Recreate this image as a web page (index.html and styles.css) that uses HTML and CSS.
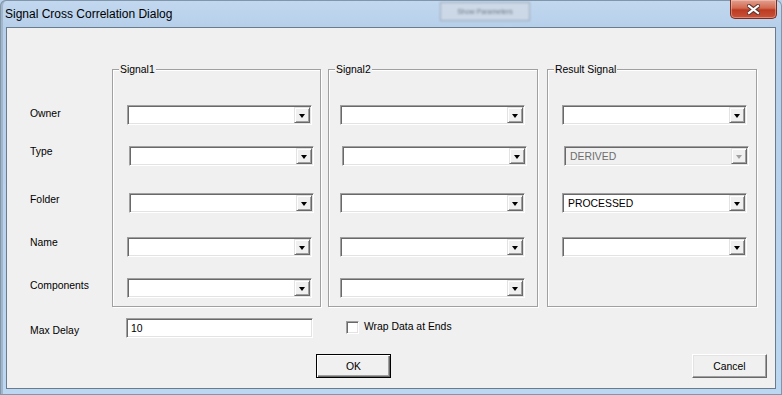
FILE: index.html
```html
<!DOCTYPE html>
<html>
<head>
  <meta name="viewport" content="width=device-width, initial-scale=1">
  <title>Signal Cross Correlation Dialog</title>
  <link rel="stylesheet" href="styles.css">
</head>
<body>
  <div class="window">
    <div class="title-bar">
      <span class="title">Signal Cross Correlation Dialog</span>
      <span class="ghost">Show Parameters</span>
      <span></span>
      <button class="close-btn" title="Close">
        <svg width="13" height="11" viewBox="0 0 13 11">
          <path d="M2 2 L11 9 M11 2 L2 9" stroke="#5a3530" stroke-width="4.2" stroke-linecap="square" fill="none"/>
          <path d="M2 2 L11 9 M11 2 L2 9" stroke="#fff" stroke-width="2.2" stroke-linecap="square" fill="none"/>
        </svg>
      </button>
    </div>

    <div class="client">
      <div class="top-row">
        <div class="labels">
          <div class="lbl lbl-owner">Owner</div>
          <div class="lbl lbl-type">Type</div>
          <div class="lbl lbl-folder">Folder</div>
          <div class="lbl lbl-name">Name</div>
          <div class="lbl lbl-comp">Components</div>
        </div>

        <div class="group group-1">
          <div class="legend">Signal1</div>
          <div class="combo row-owner"><span class="combo-text"></span><span class="combo-btn"><span class="arrow"></span></span></div>
          <div class="combo row-type nudge"><span class="combo-text"></span><span class="combo-btn"><span class="arrow"></span></span></div>
          <div class="combo row-folder nudge"><span class="combo-text"></span><span class="combo-btn"><span class="arrow"></span></span></div>
          <div class="combo row-name"><span class="combo-text"></span><span class="combo-btn"><span class="arrow"></span></span></div>
          <div class="combo row-comp"><span class="combo-text"></span><span class="combo-btn"><span class="arrow"></span></span></div>
        </div>

        <div class="group group-2">
          <div class="legend">Signal2</div>
          <div class="combo row-owner"><span class="combo-text"></span><span class="combo-btn"><span class="arrow"></span></span></div>
          <div class="combo row-type nudge"><span class="combo-text"></span><span class="combo-btn"><span class="arrow"></span></span></div>
          <div class="combo row-folder"><span class="combo-text"></span><span class="combo-btn"><span class="arrow"></span></span></div>
          <div class="combo row-name"><span class="combo-text"></span><span class="combo-btn"><span class="arrow"></span></span></div>
          <div class="combo row-comp"><span class="combo-text"></span><span class="combo-btn"><span class="arrow"></span></span></div>
        </div>

        <div class="group group-3">
          <div class="legend">Result Signal</div>
          <div class="combo row-owner"><span class="combo-text"></span><span class="combo-btn"><span class="arrow"></span></span></div>
          <div class="combo row-type nudge disabled"><span class="combo-text">DERIVED</span><span class="combo-btn"><span class="arrow"></span></span></div>
          <div class="combo row-folder"><span class="combo-text">PROCESSED</span><span class="combo-btn"><span class="arrow"></span></span></div>
          <div class="combo row-name"><span class="combo-text"></span><span class="combo-btn"><span class="arrow"></span></span></div>
        </div>
      </div>

      <div class="delay-row">
        <div class="lbl delay-label">Max Delay</div>
        <div class="textbox">10</div>
        <span class="checkbox"></span>
        <span class="check-label">Wrap Data at Ends</span>
      </div>

      <div class="button-row">
        <button class="btn btn-default">OK</button>
        <button class="btn btn-cancel">Cancel</button>
      </div>
    </div>
  </div>
</body>
</html>
```

FILE: styles.css
```css
body {
  margin: 0;
  background: #b9d2ec;
  font-family: "Liberation Sans", Arial, sans-serif;
}

.window {
  width: 782px;
  height: 395px;
  box-sizing: border-box;
  border-radius: 6px 6px 0 0;
  background: linear-gradient(to bottom, #c2d8ef 0, #b6cfea 28px, #bcd7f2 100%);
  box-shadow: inset 0 0 0 1px #8196ab, inset 3px 0 0 #a2b6ca;
  overflow: hidden;
}

/* title bar */
.title-bar {
  height: 27px;
  display: grid;
  grid-template-columns: 440px 90px 1fr 47px;
  padding-right: 5px;
  align-items: start;
}
.title {
  padding: 1px 0 0 5px;
  line-height: 27px;
  font-size: 12px;
  color: #000;
  white-space: nowrap;
}
.ghost {
  margin-top: 2px;
  height: 17px;
  font-size: 7px;
  line-height: 17px;
  text-align: center;
  color: #6f7a86;
  background: rgba(210, 218, 228, 0.75);
  border: 1px solid rgba(110, 125, 140, 0.5);
  filter: blur(1px);
}
.close-btn {
  width: 47px;
  height: 19px;
  padding: 0;
  display: flex;
  align-items: center;
  justify-content: center;
  border: 1px solid #7a2c20;
  border-top: none;
  border-radius: 0 0 5px 5px;
  background: linear-gradient(to bottom, #e3a090 0, #d2694f 45%, #bb3b22 55%, #c9533a 100%);
  box-shadow: inset 0 0 0 1px rgba(255, 220, 210, 0.4);
}

/* client area */
.client {
  margin-left: 6px;
  width: 770px;
  height: 362px;
  box-sizing: border-box;
  border: 1px solid #6a7b8c;
  background: #f0f0f0;
  padding: 0 8px 0 23px;
  font-size: 10.4px;
  color: #000;
}

.top-row {
  display: flex;
  margin-top: 41px;
}

.labels {
  width: 82px;
}
.lbl {
  line-height: 13px;
  white-space: nowrap;
}
.lbl-owner { margin-top: 38px; }
.lbl-type { margin-top: 25px; }
.lbl-folder { margin-top: 35px; }
.lbl-name { margin-top: 30px; }
.lbl-comp { margin-top: 30px; }

/* group boxes */
.group {
  box-sizing: border-box;
  border: 1px solid #a0a0a0;
  box-shadow: inset 1px 1px 0 #fff, 1px 1px 0 #fff;
  padding-bottom: 8px;
}
.group-1 { width: 209px; --inset: 14px; }
.group-2 { width: 210px; --inset: 11px; margin-left: 7px; }
.group-3 { width: 210px; --inset: 14px; margin-left: 9px; }

.legend {
  width: fit-content;
  margin: -7px 0 0 6px;
  padding: 0 1px;
  line-height: 13px;
  background: #f0f0f0;
}

/* combo boxes */
.combo {
  display: flex;
  width: 185px;
  height: 20px;
  box-sizing: border-box;
  margin-left: var(--inset);
  padding: 1px;
  background: #fff;
  border: 1px solid;
  border-color: #a0a0a0 #fff #fff #a0a0a0;
  box-shadow: inset 1px 1px 0 #696969, inset -1px -1px 0 #e3e3e3;
}
.row-owner { margin-top: 29px; }
.row-type { margin-top: 21px; }
.row-folder { margin-top: 27px; }
.row-name { margin-top: 24px; }
.row-comp { margin-top: 21px; }
.nudge { margin-left: calc(var(--inset) + 2px); }

.combo-text {
  flex: 1;
  padding: 1px 0 0 4px;
  line-height: 15px;
  white-space: nowrap;
  color: #000;
}
.combo-btn {
  width: 16px;
  height: 16px;
  box-sizing: border-box;
  display: flex;
  align-items: center;
  justify-content: center;
  background: #f0f0f0;
  border: 1px solid;
  border-color: #e3e3e3 #696969 #696969 #e3e3e3;
  box-shadow: inset 1px 1px 0 #fff, inset -1px -1px 0 #a0a0a0;
}
.arrow {
  width: 0;
  height: 0;
  margin-top: 1px;
  border-style: solid;
  border-width: 4px 3.5px 0 3.5px;
  border-color: #000 transparent transparent transparent;
}

.combo.disabled {
  background: #f0f0f0;
}
.combo.disabled .combo-text {
  color: #6d6d6d;
}
.combo.disabled .arrow {
  border-top-color: #a0a0a0;
}

/* max delay row */
.delay-row {
  display: flex;
  align-items: flex-start;
  margin-top: 11px;
}
.delay-label {
  width: 96px;
  margin-top: 6px;
}
.textbox {
  width: 187px;
  height: 20px;
  box-sizing: border-box;
  padding: 3px 0 0 4px;
  line-height: 13px;
  background: #fff;
  border: 1px solid;
  border-color: #a0a0a0 #fff #fff #a0a0a0;
  box-shadow: inset 1px 1px 0 #696969, inset -1px -1px 0 #e3e3e3;
}
.checkbox {
  width: 13px;
  height: 13px;
  box-sizing: border-box;
  margin: 3px 0 0 33px;
  background: #fff;
  border: 1px solid;
  border-color: #a0a0a0 #fff #fff #a0a0a0;
  box-shadow: inset 1px 1px 0 #696969, inset -1px -1px 0 #e3e3e3;
}
.check-label {
  margin: 2px 0 0 5px;
  line-height: 13px;
}

/* buttons */
.button-row {
  display: flex;
  margin-top: 16px;
}
.btn {
  width: 75px;
  height: 24px;
  padding: 0;
  font-family: "Liberation Sans", Arial, sans-serif;
  font-size: 10.4px;
  color: #000;
  background: #f0f0f0;
  border: 1px solid;
  border-color: #fff #696969 #696969 #fff;
  box-shadow: inset -1px -1px 0 #a0a0a0, inset 1px 1px 0 #e3e3e3;
}
.btn-default {
  margin-left: 286px;
  border-color: #000;
  box-shadow: inset 1px 1px 0 #fff, inset -1px -1px 0 #696969, inset -2px -2px 0 #a0a0a0;
}
.btn-cancel {
  margin-left: auto;
}
```
